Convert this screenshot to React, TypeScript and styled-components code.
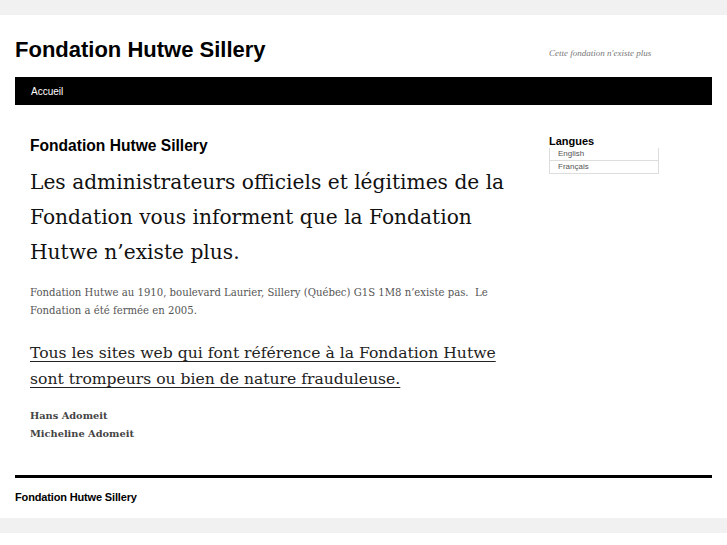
import React from 'react';
import styled, { createGlobalStyle } from 'styled-components';

const GlobalStyle = createGlobalStyle`
  html, body {
    margin: 0;
    padding: 0;
    background: #fff;
  }
  body {
    font-family: 'Liberation Sans', Arial, sans-serif;
    color: #000;
  }
`;

const Outer = styled.div`
  background: #f1f1f1;
  padding: 15px 0 15px;
`;

const Page = styled.div`
  background: #fff;
  padding: 0 15px;
  height: 503px;
  box-sizing: border-box;
  display: flex;
  flex-direction: column;
`;

const Header = styled.header`
  display: flex;
  align-items: flex-end;
  height: 62px;
  padding-bottom: 16px;
  box-sizing: border-box;
`;

const SiteTitle = styled.h1`
  margin: 0;
  font-size: 22px;
  font-weight: bold;
  line-height: 1;
  flex: 0 0 534px;
`;

const Tagline = styled.p`
  margin: 0;
  font-family: 'Liberation Serif', 'Times New Roman', serif;
  font-style: italic;
  font-size: 9px;
  color: #777;
  position: relative;
  top: -3px;
`;

const NavBar = styled.nav`
  background: #000;
  height: 28px;
  display: flex;
  align-items: center;
  padding-left: 16px;
`;

const NavLink = styled.a`
  color: #fff;
  font-size: 10px;
  text-decoration: none;
`;

const Body = styled.div`
  display: flex;
  padding: 30px 0 0 15px;
  flex: 1;
`;

const Main = styled.main`
  flex: 0 0 500px;
  padding-top: 2px;
`;

const PostTitle = styled.h2`
  margin: 0 0 10px;
  font-size: 15.6px;
  font-weight: bold;
  line-height: 18px;
`;

const serif = `'DejaVu Serif', 'Liberation Serif', serif`;

const Lead = styled.p`
  margin: 0 0 14px;
  font-family: ${serif};
  font-size: 20.2px;
  line-height: 35px;
  color: #111;
`;

const Text = styled.p<{ $muted?: boolean }>`
  margin: 0;
  font-family: ${serif};
  font-size: 10.1px;
  line-height: 18px;
  color: ${({ $muted }) => ($muted ? '#555' : '#222')};
`;

const Warning = styled.p`
  margin: 20px 0 15px;
  font-family: ${serif};
  font-size: 15.6px;
  line-height: 26px;
  color: #222;
  text-decoration: underline;
  text-decoration-thickness: 1px;
  text-underline-offset: 3px;
`;

const Signature = styled(Text)`
  font-size: 9.8px;
  font-weight: bold;
  color: #444;
`;

const Sidebar = styled.aside`
  margin-left: 19px;
  width: 110px;
`;

const WidgetTitle = styled.h3`
  margin: 0;
  font-size: 11px;
  font-weight: bold;
  line-height: 13px;
`;

const LangList = styled.ul`
  margin: 0;
  padding: 0;
  list-style: none;
  border: 1px solid #ddd;
  border-top: none;
`;

const LangItem = styled.li`
  font-size: 8px;
  line-height: 12px;
  color: #555;
  padding-left: 8px;
  & + & {
    border-top: 1px solid #ddd;
  }
`;

const Footer = styled.footer`
  border-top: 3px solid #000;
  padding: 13px 0 0;
  height: 43px;
  box-sizing: border-box;
`;

const FooterText = styled.p`
  margin: 0;
  font-size: 11px;
  font-weight: bold;
  letter-spacing: -0.15px;
`;

export default function App() {
  return (
    <>
      <GlobalStyle />
      <Outer>
        <Page>
          <Header>
            <SiteTitle>Fondation Hutwe Sillery</SiteTitle>
            <Tagline>Cette fondation n'existe plus</Tagline>
          </Header>
          <NavBar>
            <NavLink href="#">Accueil</NavLink>
          </NavBar>
          <Body>
            <Main>
              <PostTitle>Fondation Hutwe Sillery</PostTitle>
              <Lead>
                Les administrateurs officiels et légitimes de la Fondation vous informent que la
                Fondation Hutwe n’existe plus.
              </Lead>
              <Text $muted>
                Fondation Hutwe au 1910, boulevard Laurier, Sillery (Québec) G1S 1M8 n’existe pas.&nbsp; Le
                Fondation a été fermée en 2005.
              </Text>
              <Warning>
                Tous les sites web qui font référence à la Fondation Hutwe sont trompeurs ou bien de
                nature frauduleuse.
              </Warning>
              <Signature>Hans Adomeit</Signature>
              <Signature>Micheline Adomeit</Signature>
            </Main>
            <Sidebar>
              <WidgetTitle>Langues</WidgetTitle>
              <LangList>
                <LangItem>English</LangItem>
                <LangItem>Français</LangItem>
              </LangList>
            </Sidebar>
          </Body>
          <Footer>
            <FooterText>Fondation Hutwe Sillery</FooterText>
          </Footer>
        </Page>
      </Outer>
    </>
  );
}
